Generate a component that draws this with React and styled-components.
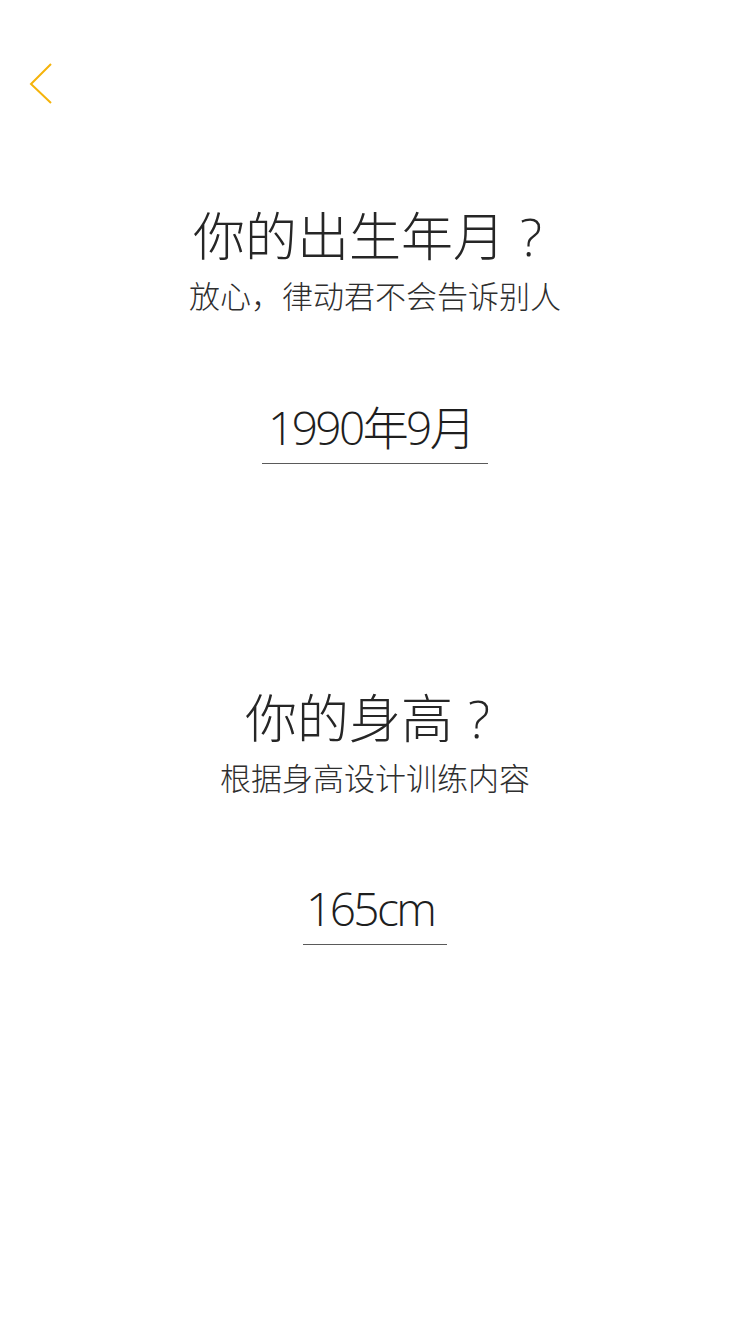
import styled, { createGlobalStyle } from 'styled-components';

const GlobalStyle = createGlobalStyle`
  html, body {
    margin: 0;
    padding: 0;
    background: #ffffff;
  }
  body {
    font-family: "Noto Sans CJK SC", "Noto Sans", sans-serif;
    color: #2b2b2b;
  }
`;

const Page = styled.div`
  width: 750px;
  min-height: 1334px;
  display: flex;
  flex-direction: column;
  background: #fff;
`;

const TopBar = styled.div`
  height: 160px;
  padding: 62px 0 0 29px;
  box-sizing: border-box;
`;

const BackButton = styled.button`
  width: 26px;
  height: 44px;
  padding: 0;
  border: none;
  background: none;
  cursor: pointer;
  display: flex;
  align-items: center;
  justify-content: center;
`;

const Question = styled.section`
  display: flex;
  flex-direction: column;
  align-items: center;
  margin-top: ${(p) => p.$top}px;
`;

const Title = styled.h1`
  margin: 0;
  font-size: 52px;
  line-height: 56px;
  font-weight: 300;
  color: #262626;
  white-space: nowrap;
`;

// full-width cell, glyph centred like the original "？"
const QMark = styled.span`
  display: inline-block;
  width: 1em;
  text-align: center;
  font-family: "Open Sans", sans-serif;
  font-weight: 300;
`;

const Hint = styled.p`
  margin: 11px 0 0;
  font-size: 31px;
  line-height: 40px;
  font-weight: 300;
  color: #2e2e2e;
  white-space: nowrap;
`;

const ValueField = styled.div`
  margin-top: ${(p) => p.$gap}px;
  width: ${(p) => p.$width}px;
  box-sizing: border-box;
  padding: 0 0 8px ${(p) => p.$indent}px;
  border-bottom: 1px solid #5a5a5a;
  font-family: "Open Sans", "Noto Sans CJK SC", sans-serif;
  font-size: 46px;
  line-height: 56px;
  font-weight: 300;
  letter-spacing: -2.6px;
  color: #1e1e1e;
  white-space: nowrap;
`;

function ChevronLeft() {
  return (
    <svg width="26" height="44" viewBox="0 0 26 44" fill="none">
      <path d="M22 2 L2 22 L22 41" stroke="#f5b30b" strokeWidth="2" />
    </svg>
  );
}

export default function App() {
  return (
    <>
      <GlobalStyle />
      <Page>
        <TopBar>
          <BackButton aria-label="返回">
            <ChevronLeft />
          </BackButton>
        </TopBar>
        <Question $top={46}>
          <Title>
            你的出生年月<QMark>?</QMark>
          </Title>
          <Hint>放心，律动君不会告诉别人</Hint>
          <ValueField $gap={84} $width={226} $indent={6}>
            1990年9月
          </ValueField>
        </Question>
        <Question $top={224}>
          <Title>
            你的身高<QMark>?</QMark>
          </Title>
          <Hint>根据身高设计训练内容</Hint>
          <ValueField $gap={83} $width={144} $indent={3}>
            165cm
          </ValueField>
        </Question>
      </Page>
    </>
  );
}
